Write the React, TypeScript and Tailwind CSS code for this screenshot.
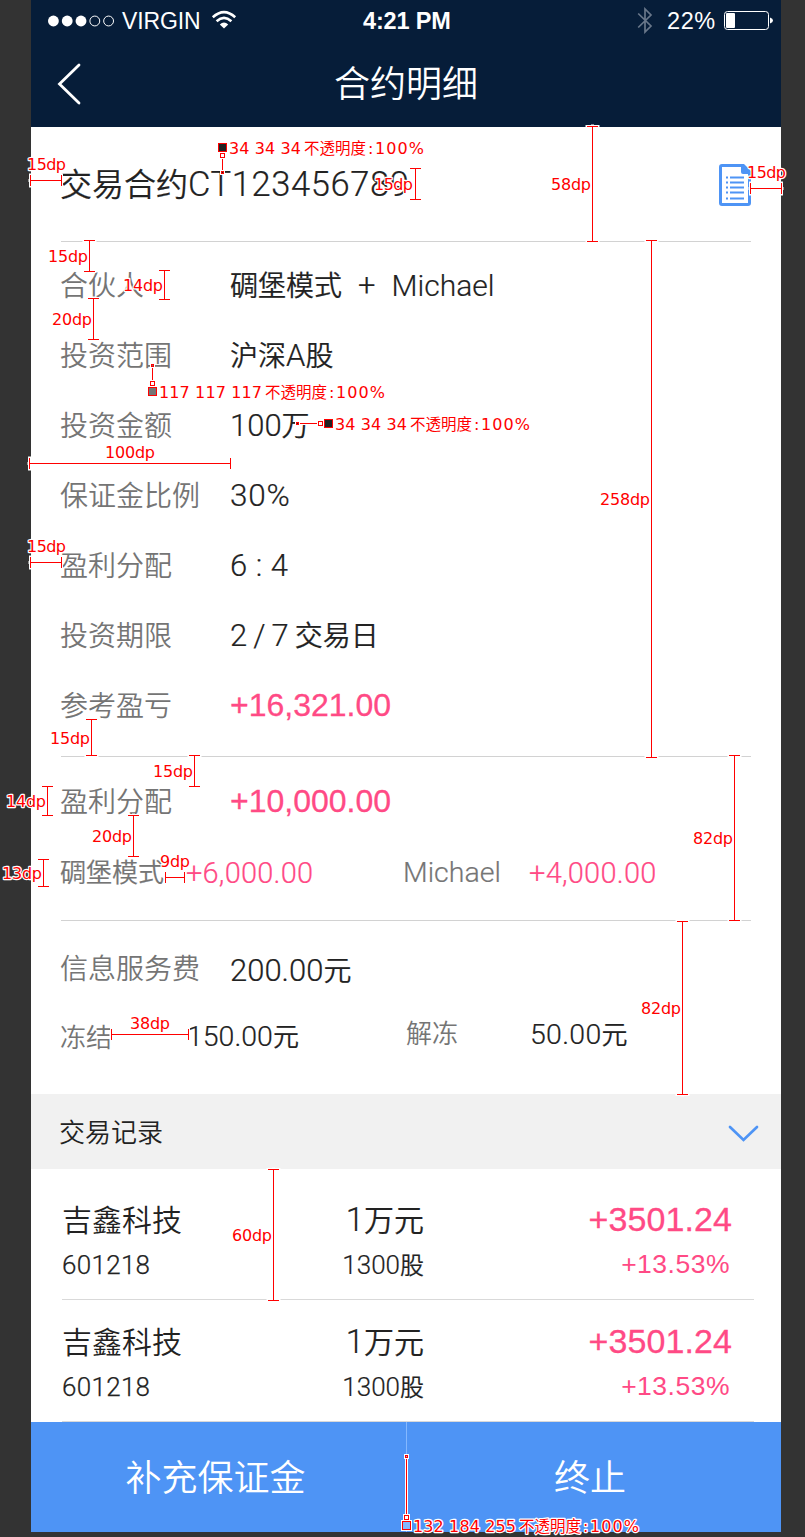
import type { ReactNode } from "react";

function StatusBar() {
  return (
    <div className="flex h-[41px] items-center pl-[17px] pr-[7px] text-white">
      <svg width="68" height="12" viewBox="0 0 68 12">
        <circle cx="5.5" cy="6" r="5.5" fill="#fff" />
        <circle cx="19.5" cy="6" r="5.5" fill="#fff" />
        <circle cx="33.5" cy="6" r="5.5" fill="#fff" />
        <circle cx="47.5" cy="6" r="5" fill="none" stroke="#fff" />
        <circle cx="61.5" cy="6" r="5" fill="none" stroke="#fff" />
      </svg>
      <span className="ml-[7px] w-[80px] shrink-0 pt-[2px] whitespace-nowrap font-['Liberation_Sans',sans-serif] text-[23px] leading-none tracking-[-0.1px]">VIRGIN</span>
      <svg className="ml-[9px] -mt-px shrink-0" width="26" height="20" viewBox="0 0 26 20">
        <g fill="none" stroke="#fff" strokeWidth="2.6">
          <path d="M1.8 7.2Q13 -3 24.2 7.2" />
          <path d="M5.6 11.2Q13 4.6 20.4 11.2" />
        </g>
        <path d="M8.8 14.4Q13 10.8 17.2 14.4L13 18.6Z" fill="#fff" />
      </svg>
      <span className="ml-[126px] w-[90px] shrink-0 pt-[3px] whitespace-nowrap font-['Liberation_Sans',sans-serif] text-[23.5px] font-bold leading-none tracking-[-0.15px]">4:21 PM</span>
      <svg className="ml-[184px] shrink-0" width="16" height="27" viewBox="0 0 16 27">
        <path d="M1.2 6.5L14 19L8 25V2L14 8L1.2 20.5" fill="none" stroke="#69778a" strokeWidth="1.7" />
      </svg>
      <span className="ml-[14px] w-[50px] shrink-0 pt-[3px] whitespace-nowrap font-['Liberation_Sans',sans-serif] text-[23.5px] leading-none tracking-[0.6px]">22%</span>
      <svg className="ml-[7px] shrink-0" width="50" height="19" viewBox="0 0 50 19">
        <rect x="0.5" y="0.5" width="44" height="18" rx="3" fill="none" stroke="#fff" />
        <rect x="2" y="2" width="9" height="15" rx="1" fill="#fff" />
        <path d="M46 6.5Q49 7.5 49 9.5T46 12.5Z" fill="#fff" />
      </svg>
    </div>
  );
}

function Field({ label, children }: { label: string; children: ReactNode }) {
  return (
    <div className="-ml-px flex h-[70px] items-center">
      <span className="w-[170px] pt-[2px] text-[28px] leading-[40px] text-[#757575]">{label}</span>
      <span className="whitespace-pre text-[31px] leading-[40px] text-[#222222] [-webkit-text-stroke:0.2px]">{children}</span>
    </div>
  );
}

function Gain({ children }: { children: ReactNode }) {
  return (
    <span className="relative -top-px font-['Liberation_Sans',sans-serif] text-[32px] font-normal text-[#ff4a85] [-webkit-text-stroke:0.3px]">
      {children}
    </span>
  );
}

function Trade() {
  return (
    <div className="ml-[31px] mr-[27px] flex h-[122px] justify-between border-b border-[#d9d9d9] pt-[20px] text-[#222222]">
      <div className="w-[160px]">
        <div className="text-[30px] leading-[46px]">吉鑫科技</div>
        <div className="text-[26px] leading-[42px] tracking-[0.3px] [-webkit-text-stroke:0.25px]">601218</div>
      </div>
      <div className="w-[202px] text-right [-webkit-text-stroke:0.2px]">
        <div className="text-[33px] leading-[44px]">1<span className="text-[30px]">万元</span></div>
        <div className="text-[26px] leading-[44px]">1300<span className="text-[24px]">股</span></div>
      </div>
      <div className="w-[330px] pr-[22px] text-right font-['Liberation_Sans',sans-serif] font-normal text-[#ff4a85]">
        <div className="text-[34px] leading-[43px] tracking-[0.1px] [-webkit-text-stroke:0.3px]">+3501.24</div>
        <div className="pr-[2px] text-[26.5px] leading-[47px] tracking-[0.5px]">+13.53%</div>
      </div>
    </div>
  );
}

const verticals: [number, number, number][] = [
  [415, 168, 199], [592, 126, 241], [89, 240, 271], [164, 270, 299], [93, 298, 339],
  [651, 240, 757], [91, 719, 755], [194, 755, 786], [47, 786, 815], [133, 815, 856],
  [43, 859, 886], [734, 755, 920], [682, 921, 1094], [273, 1169, 1300],
];
const horizontals: [number, number, number][] = [
  [180, 30, 61], [188, 750, 781], [463, 29, 230], [562, 30, 61], [877, 165, 184], [1034, 111, 188],
];
const sizes: [number, number, number, string][] = [
  [27, 170, 39, "15dp"], [374, 190, 39, "15dp"], [551, 190, 40, "58dp"], [747, 178, 39, "15dp"],
  [48, 262, 40, "15dp"], [123, 291, 40, "14dp"], [52, 325, 40, "20dp"], [105, 458, 50, "100dp"],
  [600, 505, 50, "258dp"], [27, 552, 39, "15dp"], [50, 744, 40, "15dp"], [153, 777, 40, "15dp"],
  [6, 807, 40, "14dp"], [92, 842, 40, "20dp"], [160, 867, 30, "9dp"], [2, 879, 40, "13dp"],
  [693, 844, 40, "82dp"], [641, 1014, 40, "82dp"], [130, 1029, 40, "38dp"], [232, 1241, 40, "60dp"],
];
const colours: [number, number, string, number][] = [
  [229, 154, "34 34 34", 72], [159, 398, "117 117 117", 103], [335, 430, "34 34 34", 72], [413, 1532, "132 184 255", 103],
];
const leaders: { from: [number, number]; to: [number, number]; swatch: [number, number]; fill: string }[] = [
  { from: [222, 172], to: [222, 155], swatch: [222, 147], fill: "#222222" },
  { from: [152, 365], to: [152, 383], swatch: [152, 391], fill: "#757575" },
  { from: [297, 423], to: [320, 423], swatch: [328, 423], fill: "#222222" },
  { from: [406, 1456], to: [406, 1517], swatch: [406, 1525], fill: "#84b8ff" },
];

const linePath =
  verticals.map(([x, a, b]) => `M${x + 0.5} ${a}V${b + 1}M${x - 5} ${a + 0.5}h11M${x - 5} ${b + 0.5}h11`).join("") +
  horizontals.map(([y, a, b]) => `M${a} ${y + 0.5}H${b + 1}M${a + 0.5} ${y - 5}v11M${b + 0.5} ${y - 5}v11`).join("");

function Annotations() {
  return (
    <svg className="pointer-events-none absolute left-0 top-0" width="805" height="1537" viewBox="0 0 805 1537">
      <path d={linePath} stroke="#fff" strokeWidth="3" strokeLinecap="square" fill="none" />
      <path d={linePath} stroke="#ff0000" fill="none" />
      {leaders.map(({ from, to, swatch, fill }) => (
        <g key={swatch.join()}>
          <path d={`M${from[0] + 0.5} ${from[1] + 0.5}L${to[0] + 0.5} ${to[1] + 0.5}`} stroke="#fff" strokeWidth="3" />
          <path d={`M${from[0] + 0.5} ${from[1] + 0.5}L${to[0] + 0.5} ${to[1] + 0.5}`} stroke="#ff0000" />
          <rect x={from[0] - 2} y={from[1] - 2} width="5" height="5" fill="#fff" />
          <rect x={from[0] - 1} y={from[1] - 1} width="3" height="3" fill="#ff0000" />
          <rect x={from[0]} y={from[1]} width="1" height="1" fill={fill} />
          <rect x={to[0] - 3} y={to[1] - 3} width="7" height="7" fill="#fff" />
          <rect x={to[0] - 1.5} y={to[1] - 1.5} width="4" height="4" fill="#fff" stroke="#ff0000" />
          <rect x={swatch[0] - 5} y={swatch[1] - 5} width="11" height="11" fill="#fff" />
          <rect x={swatch[0] - 3.5} y={swatch[1] - 3.5} width="8" height="8" fill={fill} stroke="#ff0000" />
        </g>
      ))}
      <g className="font-['DejaVu_Sans',sans-serif] text-[16px] font-normal [paint-order:stroke_fill]" fill="#ff0000" stroke="#fff" strokeWidth="2.4" strokeLinejoin="round">
        {sizes.map(([x, y, w, t]) => (
          <text key={`${x}-${y}`} x={x} y={y} textLength={w} lengthAdjust="spacing">{t}</text>
        ))}
        {colours.map(([x, y, t, w]) => (
          <g key={`${x}-${y}`}>
            <text x={x} y={y} textLength={w}>{t}</text>
            <text x={x + w + 3} y={y} className="font-['Noto_Sans_CJK_SC',sans-serif] text-[15.5px]">不透明度</text>
            <text x={x + w + 67} y={y} textLength={4}>:</text>
            <text x={x + w + 74} y={y} textLength={49}>100%</text>
          </g>
        ))}
      </g>
    </svg>
  );
}

export default function App() {
  return (
    <div className="relative h-[1537px] w-[805px] overflow-hidden bg-[#333333] pl-[31px] pr-[24px] font-[Roboto,'Noto_Sans_CJK_SC',sans-serif] font-[350]">
      <main className="flex h-[1532px] w-[750px] flex-col bg-white">
        <header className="h-[127px] shrink-0 bg-[#061d39] text-white">
          <StatusBar />
          <div className="flex h-[86px] items-center pl-[26px]">
            <svg width="24" height="42" viewBox="0 0 24 42">
              <path d="M22 2L2.5 21L22 40" fill="none" stroke="#fff" strokeWidth="2.8" strokeLinecap="round" />
            </svg>
            <h1 className="ml-[253px] pt-[2px] text-[36px] leading-[50px]">合约明细</h1>
          </div>
        </header>

        <section className="mx-[30px] flex h-[115px] shrink-0 items-center justify-between border-b border-[#d2d2d2] text-[#222222]">
          <h2 className="-ml-px whitespace-nowrap text-[34.5px] leading-[50px] tracking-[0.6px] [-webkit-text-stroke:0.2px]">
            <span className="text-[32px] tracking-normal">交易合约</span>CT123456789
          </h2>
          <svg className="mt-[2px]" width="32" height="42" viewBox="0 0 32 42">
            <path d="M22 1.5H3Q1.5 1.5 1.5 3V39Q1.5 40.5 3 40.5H29Q30.5 40.5 30.5 39V10" fill="none" stroke="#4e94f5" strokeWidth="3" />
            <path d="M22 0H25L32 7V10H24Q22 10 22 8Z" fill="#4e94f5" />
            <path d="M7 13.5h2m2 0h14M7 18.5h2m2 0h14M7 23.5h2m2 0h14M7 28.5h2m2 0h14M7 34.5h2m2 0h14" stroke="#4e94f5" strokeWidth="2" />
          </svg>
        </section>

        <section className="mx-[30px] h-[515px] shrink-0 border-b border-[#d2d2d2] pt-[9px]">
          <Field label="合伙人"><span className="text-[28px]">碉堡模式</span><span className="mx-[16px]">+</span><span className="text-[30px]">Michael</span></Field>
          <Field label="投资范围"><span className="text-[28px]">沪深</span>A<span className="text-[28px]">股</span></Field>
          <Field label="投资金额">100<span className="text-[28px]">万</span></Field>
          <Field label="保证金比例"><span className="text-[31.5px] tracking-[0.8px]">30%</span></Field>
          <Field label="盈利分配">6<span className="mx-[8.5px]">:</span>4</Field>
          <Field label="投资期限">2<span className="mx-[6px]">/</span>7<span className="ml-[6px] text-[28px]">交易日</span></Field>
          <Field label="参考盈亏"><Gain>+16,321.00</Gain></Field>
        </section>

        <section className="mx-[30px] h-[164px] shrink-0 border-b border-[#d2d2d2] pt-[10px]">
          <Field label="盈利分配"><Gain>+10,000.00</Gain></Field>
          <div className="-ml-px flex h-[70px] items-center pt-px text-[29px] leading-[40px] [-webkit-text-stroke:0.2px]">
            <span className="w-[126px] pt-px text-[26px] text-[#757575]">碉堡模式</span>
            <span className="w-[217px] tracking-[0.2px] text-[#ff4a85]">+6,000.00</span>
            <span className="w-[126px] text-[28.5px] text-[#757575]">Michael</span>
            <span className="tracking-[0.25px] text-[#ff4a85]">+4,000.00</span>
          </div>
        </section>

        <section className="mx-[30px] h-[173px] shrink-0 pt-[13px]">
          <div className="-ml-px flex h-[70px] items-center text-[28px] leading-[40px]">
            <span className="w-[170px] pt-px text-[#757575]">信息服务费</span>
            <span className="pt-[4px] text-[31px] text-[#222222] [-webkit-text-stroke:0.2px]">200.00<span className="text-[28px]">元</span></span>
          </div>
          <div className="-ml-px flex h-[64px] items-center text-[28.5px] leading-[40px] text-[#222222]">
            <span className="w-[127px] pt-[3px] text-[26px] text-[#757575]">冻结</span>
            <span className="w-[219px] pt-[2px] [-webkit-text-stroke:0.2px]">150.00<span className="text-[26px]">元</span></span>
            <span className="w-[124px] pb-[4px] text-[26px] text-[#757575]">解冻</span>
            <span className="pb-[2px] tracking-[0.3px] [-webkit-text-stroke:0.2px]">50.00<span className="text-[26px]">元</span></span>
          </div>
        </section>

        <div className="flex h-[75px] shrink-0 items-center justify-between bg-[#f1f1f1] pl-[28px] pr-[22px] pt-[3px]">
          <span className="text-[26px] leading-[40px] text-[#222222]">交易记录</span>
          <svg className="mt-px" width="31" height="18" viewBox="0 0 31 18">
            <path d="M2 2L15.5 15L29 2" fill="none" stroke="#4e94f5" strokeWidth="2.7" strokeLinecap="round" />
          </svg>
        </div>

        <section className="h-[253px] shrink-0 pt-[9px]">
          <Trade />
          <Trade />
        </section>

        <footer className="flex h-[110px] shrink-0 bg-[#4e94f5] text-[36px] leading-[50px] text-white">
          <button className="w-[376px] border-r border-[#84b8ff] pr-[6px] pt-[4px]">补充保证金</button>
          <button className="flex-1 pr-[8px] pt-[4px]">终止</button>
        </footer>
      </main>
      <Annotations />
    </div>
  );
}
